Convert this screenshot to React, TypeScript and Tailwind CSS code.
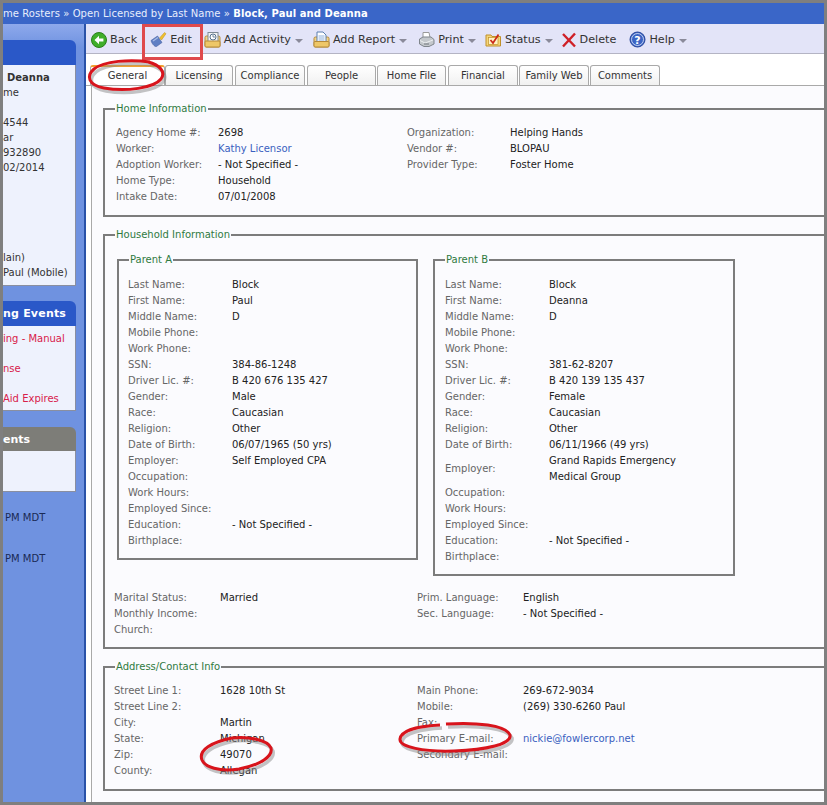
import React from 'react'

const label = 'text-[#666666]'
const value = 'text-[#222222]'

function Caret() {
  return <span className="ml-[4px] mt-[2px] h-0 w-0 border-x-[4px] border-t-[4px] border-x-transparent border-t-[#8a8a9a]" />
}

const BackIcon = () => (
  <svg width="16" height="16" viewBox="0 0 16 16">
    <circle cx="8" cy="8" r="7.5" fill="#3fae2a" stroke="#2a7f1c" />
    <path d="M3.5 8 8 3.8v2.6h4.4v3.2H8v2.6z" fill="#fff" />
  </svg>
)

const EditIcon = () => (
  <svg width="17" height="17" viewBox="0 0 17 17">
    <path d="M1 9.5 7.5 5l4.5 6.5L6.5 15.5c-2 .6-5-3.500-5.500-6z" fill="#5f7fc4" stroke="#47609f" strokeWidth=".6" />
    <path d="M3 10 8 6.500" stroke="#a9bce6" strokeWidth="1.200" />
    <path d="m9.500 7 5-5.500 1.500 1.200-4.500 6.300z" fill="#f0c030" stroke="#b98f1a" strokeWidth=".5" />
  </svg>
)

const ActivityIcon = () => (
  <svg width="17" height="17" viewBox="0 0 17 17">
    <rect x="1" y="5" width="15" height="11" rx="1.500" fill="#f2d488" stroke="#b58a3a" />
    <rect x="4" y="1.500" width="10" height="9" fill="#f4f4f4" stroke="#7f8a96" />
    <circle cx="9" cy="6" r="3" fill="#fff" stroke="#56708c" />
    <path d="M9 4v2h2" stroke="#56708c" fill="none" strokeWidth=".8" />
    <rect x="1" y="10" width="15" height="6" rx="1" fill="#eec768" stroke="#b58a3a" />
  </svg>
)

const ReportIcon = () => (
  <svg width="17" height="17" viewBox="0 0 17 17">
    <rect x="1" y="6" width="15" height="10" rx="1.500" fill="#f2d488" stroke="#b58a3a" />
    <path d="M4 1h6l3 3v7H4z" fill="#fff" stroke="#5a7fb0" />
    <path d="M5.500 5h6M5.500 7h6M5.500 9h6" stroke="#6f9ad0" strokeWidth=".8" />
    <rect x="1" y="10.500" width="15" height="5.500" rx="1" fill="#eec768" stroke="#b58a3a" />
  </svg>
)

const PrintIcon = () => (
  <svg width="17" height="17" viewBox="0 0 17 17">
    <path d="M5 1.500h6l1 5H5z" fill="#fff" stroke="#9a9a9a" />
    <path d="M1.500 8 5 6h8l3 2.500V13l-5 2.500H6L1.500 13z" fill="#c4c8cc" stroke="#80868c" />
    <path d="M2 9.500 7 12l8-3" fill="none" stroke="#eef0f2" />
    <path d="M6 13h5" stroke="#70767c" />
  </svg>
)

const StatusIcon = () => (
  <svg width="17" height="17" viewBox="0 0 17 17">
    <path d="M1 4h5l1 1.500h8.500V15H1z" fill="#f5d67a" stroke="#c0902a" />
    <rect x="3.500" y="6.500" width="9.500" height="7" fill="#fff3c4" stroke="#c0902a" strokeWidth=".7" />
    <path d="m5.500 9 2.500 3L13.500 3.500" fill="none" stroke="#cc2a1a" strokeWidth="1.700" />
  </svg>
)

const DeleteIcon = () => (
  <svg width="16" height="16" viewBox="0 0 16 16">
    <path d="M2 2 14 14.500M14 1.500 2 14.500" stroke="#cf2027" strokeWidth="2.400" />
  </svg>
)

const HelpIcon = () => (
  <svg width="17" height="17" viewBox="0 0 17 17">
    <circle cx="8.500" cy="8.500" r="7.500" fill="#3a64c4" stroke="#25449a" />
    <circle cx="8.500" cy="8.500" r="6" fill="none" stroke="#dfe6f8" strokeWidth=".8" />
    <text x="8.500" y="12.500" textAnchor="middle" fontSize="11" fontWeight="700" fill="#fff" fontFamily="DejaVu Sans, sans-serif">?</text>
  </svg>
)

function ToolItem({ icon, text, caret, className }: any) {
  return (
    <div className={`flex items-center ${className}`}>
      {icon}
      <span className="ml-[3px] text-[11.2px] text-[#333333]">{text}</span>
      {caret ? <Caret /> : null}
    </div>
  )
}

function Tab({ text, active, className }: any) {
  return (
    <div className={`flex h-[20px] items-center justify-center rounded-t-[3px] border border-b-0 border-[#a9a9a9] text-[10px] text-[#333333] ${active ? 'border-t-2 border-t-[#f0a030] bg-white' : 'bg-gradient-to-b from-white to-[#f1f1f1]'} ${className}`}>
      {text}
    </div>
  )
}

function Row({ name, val, cols, link, tall }: any) {
  return (
    <div className={`grid items-center ${cols} ${tall ? 'h-[32px]' : 'h-[16px]'}`}>
      <span className={label}>{name}</span>
      <span className={link ? 'text-[#3a5fc0]' : value}>{val}</span>
    </div>
  )
}

function Box({ title, className, children }: any) {
  return (
    <fieldset className={`border-2 border-[#7c7c7c] ${className}`}>
      <legend className="ml-[10px] px-[1px] text-[10px] leading-[16px] text-[#2f7a3f]">{title}</legend>
      {children}
    </fieldset>
  )
}

const parentA = [
  ['Last Name:', 'Block'],
  ['First Name:', 'Paul'],
  ['Middle Name:', 'D'],
  ['Mobile Phone:', ''],
  ['Work Phone:', ''],
  ['SSN:', '384-86-1248'],
  ['Driver Lic. #:', 'B 420 676 135 427'],
  ['Gender:', 'Male'],
  ['Race:', 'Caucasian'],
  ['Religion:', 'Other'],
  ['Date of Birth:', '06/07/1965 (50 yrs)'],
  ['Employer:', 'Self Employed CPA'],
  ['Occupation:', ''],
  ['Work Hours:', ''],
  ['Employed Since:', ''],
  ['Education:', '- Not Specified -'],
  ['Birthplace:', ''],
]

const parentB = [
  ['Last Name:', 'Block'],
  ['First Name:', 'Deanna'],
  ['Middle Name:', 'D'],
  ['Mobile Phone:', ''],
  ['Work Phone:', ''],
  ['SSN:', '381-62-8207'],
  ['Driver Lic. #:', 'B 420 139 135 437'],
  ['Gender:', 'Female'],
  ['Race:', 'Caucasian'],
  ['Religion:', 'Other'],
  ['Date of Birth:', '06/11/1966 (49 yrs)'],
  ['Employer:', <>Grand Rapids Emergency<br />Medical Group</>],
  ['Occupation:', ''],
  ['Work Hours:', ''],
  ['Employed Since:', ''],
  ['Education:', '- Not Specified -'],
  ['Birthplace:', ''],
]

function Annotations() {
  return (
    <svg className="pointer-events-none absolute left-0 top-0" width="827" height="805" viewBox="0 0 827 805" fill="none">
      <rect x="143.500" y="25.500" width="58" height="33" stroke="#df4a4c" strokeWidth="3" />
      <g stroke="#8a8a8a" strokeOpacity=".5" strokeWidth="3.500" transform="translate(2 3)">
        <path d="M150 62c-20-3-46-1-56 7-8 7-6 16 10 19 22 4 50 0 57-9 5-7-1-14-13-17" />
        <path d="M202 760c-4-10 10-18 30-22 16-2 36 2 39 10 2 8-10 17-32 21-20 3-34-2-37-9z" />
        <path d="M446 724c30-2 60 1 64 11 2 9-24 15-56 16-30 1-55-4-54-12 1-9 20-13 40-14" />
      </g>
      <g stroke="#d8141c" strokeWidth="3">
        <path d="M150 62c-20-3-46-1-56 7-8 7-6 16 10 19 22 4 50 0 57-9 5-7-1-14-13-17" />
        <path d="M202 760c-4-10 10-18 30-22 16-2 36 2 39 10 2 8-10 17-32 21-20 3-34-2-37-9z" />
        <path d="M446 724c30-2 60 1 64 11 2 9-24 15-56 16-30 1-55-4-54-12 1-9 20-13 40-14" />
      </g>
    </svg>
  )
}

export default function App() {
  return (
    <div className="relative h-[805px] w-[827px] overflow-hidden bg-[#7f7f7f] p-[3px] text-[10px] leading-[16px]" style={{ fontFamily: '"DejaVu Sans", Verdana, sans-serif' }}>
      <div className="flex h-full flex-col overflow-hidden bg-white">
        <div className="flex h-[21px] shrink-0 items-center whitespace-pre bg-[#3a66c8] text-[10px] tracking-[0.07px] text-[#e8eefc]">
          me Rosters » Open Licensed by Last Name » <b className="text-white">Block, Paul and Deanna</b>
        </div>
        <div className="flex min-h-0 flex-1">
          {/* left column, cut off by the crop */}
          <div className="w-[83px] shrink-0 border-r-2 border-[#2a52a8] bg-gradient-to-b from-[#8ea9ec] from-0% to-[#6f92e0] to-[3%] pt-[16px]">
            <div className="w-[73px] whitespace-nowrap">
              <div className="h-[25px] rounded-tr-[6px] bg-[#2a58c8]" />
              <div className="h-[221px] overflow-hidden border-b border-r border-[#8a8fa0] bg-[#eef2fd] pt-[5px] leading-[15px] text-[#333333]">
                <div className="pl-[4px] font-bold">Deanna</div>
                <div>me</div>
                <div className="h-[15px]" />
                <div>4544</div>
                <div>ar</div>
                <div>932890</div>
                <div>02/2014</div>
                <div className="h-[75px]" />
                <div>lain)</div>
                <div>Paul (Mobile)</div>
              </div>
              <div className="mt-[15px] flex h-[25px] items-center rounded-tr-[6px] bg-[#2a58c8] text-[11px] font-bold tracking-[0.2px] text-white">ng Events</div>
              <div className="h-[85px] border-b border-r border-[#8a8fa0] bg-[#eef2fd] pt-[5px] leading-[15px] text-[#d8204a]">
                <div>ing - Manual</div>
                <div className="mt-[15px]">nse</div>
                <div className="mt-[15px]">Aid Expires</div>
              </div>
              <div className="mt-[16px] flex h-[24px] items-center rounded-tr-[6px] bg-[#7d7d78] pt-[1px] text-[11px] font-bold text-white">ents</div>
              <div className="h-[41px] border-b border-r border-[#8a8fa0] bg-[#eef2fd]" />
              <div className="mt-[18px] pl-[2px] text-[#1a2a55]">PM MDT</div>
              <div className="mt-[25px] pl-[2px] text-[#1a2a55]">PM MDT</div>
            </div>
          </div>

          <div className="flex min-w-0 flex-1 flex-col">
            <div className="flex h-[30px] shrink-0 items-center whitespace-nowrap border-b border-[#b4b4c4] bg-[#e3e4f8] pl-[5px] pt-[2px]">
              <ToolItem icon={<BackIcon />} text="Back" />
              <ToolItem icon={<EditIcon />} text="Edit" className="ml-[13px]" />
              <ToolItem icon={<ActivityIcon />} text="Add Activity" caret className="ml-[12px]" />
              <ToolItem icon={<ReportIcon />} text="Add Report" caret className="ml-[10px]" />
              <ToolItem icon={<PrintIcon />} text="Print" caret className="ml-[11px]" />
              <ToolItem icon={<StatusIcon />} text="Status" caret className="ml-[9px]" />
              <ToolItem icon={<DeleteIcon />} text="Delete" className="ml-[8px]" />
              <ToolItem icon={<HelpIcon />} text="Help" caret className="ml-[13px]" />
            </div>

            <div className="mt-[11px] flex shrink-0 gap-[1px] border-b border-[#a9a9a9] pl-[4px]">
              <Tab text="General" active className="w-[75px]" />
              <Tab text="Licensing" className="ml-[-1px] w-[68px]" />
              <Tab text="Compliance" className="ml-[1px] w-[70px]" />
              <Tab text="People" className="ml-[1px] w-[69px]" />
              <Tab text="Home File" className="w-[69px]" />
              <Tab text="Financial" className="ml-[1px] w-[70px]" />
              <Tab text="Family Web" className="w-[70px]" />
              <Tab text="Comments" className="w-[70px]" />
            </div>

            <div className="ml-[5px] min-h-0 flex-1 overflow-hidden border-l border-[#a9a9a9] bg-[#fbfbfe] pl-[11px] pt-[15px]">
              <div className="w-[760px]">
                <Box title="Home Information" className="h-[116px]">
                  <div className="flex pl-[11px] pt-[8px]">
                    <div className="w-[291px]">
                      <Row name="Agency Home #:" val="2698" cols="grid-cols-[102px_1fr]" />
                      <Row name="Worker:" val="Kathy Licensor" link cols="grid-cols-[102px_1fr]" />
                      <Row name="Adoption Worker:" val="- Not Specified -" cols="grid-cols-[102px_1fr]" />
                      <Row name="Home Type:" val="Household" cols="grid-cols-[102px_1fr]" />
                      <Row name="Intake Date:" val="07/01/2008" cols="grid-cols-[102px_1fr]" />
                    </div>
                    <div>
                      <Row name="Organization:" val="Helping Hands" cols="grid-cols-[103px_1fr]" />
                      <Row name="Vendor #:" val="BLOPAU" cols="grid-cols-[103px_1fr]" />
                      <Row name="Provider Type:" val="Foster Home" cols="grid-cols-[103px_1fr]" />
                    </div>
                  </div>
                </Box>

                <Box title="Household Information" className="mt-[10px] h-[422px]">
                  <div className="flex items-start gap-[15px] pl-[12px] pt-[9px]">
                    <Box title="Parent A" className="h-[308px] w-[301px]">
                      <div className="pl-[9px] pt-[9px]">
                        {parentA.map((r) => <Row key={r[0] as string} name={r[0]} val={r[1]} cols="grid-cols-[104px_1fr]" />)}
                      </div>
                    </Box>
                    <Box title="Parent B" className="h-[324px] w-[302px]">
                      <div className="pl-[10px] pt-[9px]">
                        {parentB.map((r) => <Row key={r[0] as string} name={r[0]} val={r[1]} tall={r[0] === 'Employer:'} cols="grid-cols-[104px_1fr]" />)}
                      </div>
                    </Box>
                  </div>
                  <div className="flex pl-[9px] pt-[14px]">
                    <div className="w-[303px]">
                      <Row name="Marital Status:" val="Married" cols="grid-cols-[106px_1fr]" />
                      <Row name="Monthly Income:" val="" cols="grid-cols-[106px_1fr]" />
                      <Row name="Church:" val="" cols="grid-cols-[106px_1fr]" />
                    </div>
                    <div>
                      <Row name="Prim. Language:" val="English" cols="grid-cols-[106px_1fr]" />
                      <Row name="Sec. Language:" val="- Not Specified -" cols="grid-cols-[106px_1fr]" />
                    </div>
                  </div>
                </Box>

                <Box title="Address/Contact Info" className="mt-[10px] h-[132px]">
                  <div className="flex pl-[9px] pt-[8px]">
                    <div className="w-[303px]">
                      <Row name="Street Line 1:" val="1628 10th St" cols="grid-cols-[106px_1fr]" />
                      <Row name="Street Line 2:" val="" cols="grid-cols-[106px_1fr]" />
                      <Row name="City:" val="Martin" cols="grid-cols-[106px_1fr]" />
                      <Row name="State:" val="Michigan" cols="grid-cols-[106px_1fr]" />
                      <Row name="Zip:" val="49070" cols="grid-cols-[106px_1fr]" />
                      <Row name="County:" val="Allegan" cols="grid-cols-[106px_1fr]" />
                    </div>
                    <div>
                      <Row name="Main Phone:" val="269-672-9034" cols="grid-cols-[106px_1fr]" />
                      <Row name="Mobile:" val="(269) 330-6260 Paul" cols="grid-cols-[106px_1fr]" />
                      <Row name="Fax:" val="" cols="grid-cols-[106px_1fr]" />
                      <Row name="Primary E-mail:" val="nickie@fowlercorp.net" link cols="grid-cols-[106px_1fr]" />
                      <Row name="Secondary E-mail:" val="" cols="grid-cols-[106px_1fr]" />
                    </div>
                  </div>
                </Box>
              </div>
            </div>
          </div>
        </div>
      </div>
      <Annotations />
    </div>
  )
}
